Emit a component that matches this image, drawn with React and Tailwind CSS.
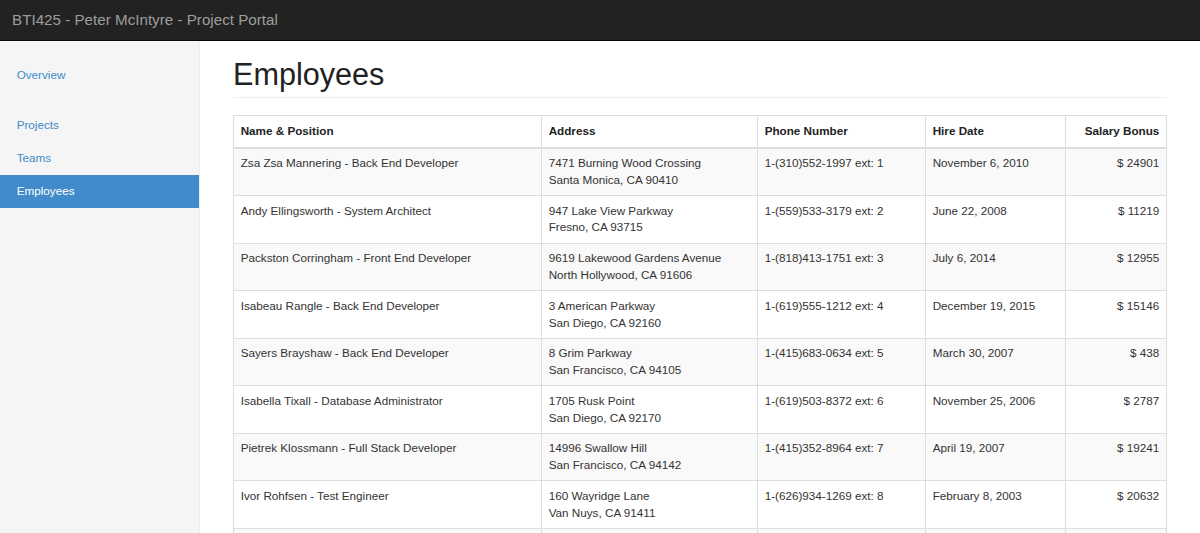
import React from "react";

const employees = [
  { name: "Zsa Zsa Mannering - Back End Developer", street: "7471 Burning Wood Crossing", city: "Santa Monica, CA 90410", phone: "1-(310)552-1997 ext: 1", hired: "November 6, 2010", bonus: "$ 24901" },
  { name: "Andy Ellingsworth - System Architect", street: "947 Lake View Parkway", city: "Fresno, CA 93715", phone: "1-(559)533-3179 ext: 2", hired: "June 22, 2008", bonus: "$ 11219" },
  { name: "Packston Corringham - Front End Developer", street: "9619 Lakewood Gardens Avenue", city: "North Hollywood, CA 91606", phone: "1-(818)413-1751 ext: 3", hired: "July 6, 2014", bonus: "$ 12955" },
  { name: "Isabeau Rangle - Back End Developer", street: "3 American Parkway", city: "San Diego, CA 92160", phone: "1-(619)555-1212 ext: 4", hired: "December 19, 2015", bonus: "$ 15146" },
  { name: "Sayers Brayshaw - Back End Developer", street: "8 Grim Parkway", city: "San Francisco, CA 94105", phone: "1-(415)683-0634 ext: 5", hired: "March 30, 2007", bonus: "$ 438" },
  { name: "Isabella Tixall - Database Administrator", street: "1705 Rusk Point", city: "San Diego, CA 92170", phone: "1-(619)503-8372 ext: 6", hired: "November 25, 2006", bonus: "$ 2787" },
  { name: "Pietrek Klossmann - Full Stack Developer", street: "14996 Swallow Hill", city: "San Francisco, CA 94142", phone: "1-(415)352-8964 ext: 7", hired: "April 19, 2007", bonus: "$ 19241" },
  { name: "Ivor Rohfsen - Test Engineer", street: "160 Wayridge Lane", city: "Van Nuys, CA 91411", phone: "1-(626)934-1269 ext: 8", hired: "February 8, 2003", bonus: "$ 20632" },
];

const App = () => {
  const cell = "px-[6.67px] py-[6.6px] align-top border-t border-l border-[#ddd] first:border-l-0";
  const head = "px-[6.67px] py-[7.1px] border-b-2 border-[#ddd]";

  return (
    <div
      className="h-screen overflow-hidden flex flex-col bg-white text-[#333] text-[11.7px] leading-[16.67px]"
      style={{ fontFamily: '"Liberation Sans", Arial, sans-serif' }}
    >
      {/* top navbar */}
      <div className="h-[41px] shrink-0 bg-[#222] border-b border-[#080808] flex items-center px-[12px]">
        <span className="text-[15.2px] text-[#9d9d9d]">BTI425 - Peter McIntyre - Project Portal</span>
      </div>

      <div className="flex flex-1 min-h-0">
        {/* sidebar */}
        <div className="w-[200px] shrink-0 bg-[#f5f5f5] border-r border-[#eee] pt-[17.5px]">
          <ul className="mb-[16.67px]">
            <li>
              <a className="block px-[16.67px] py-[8.33px] text-[#428bca]">Overview</a>
            </li>
          </ul>
          <ul>
            <li>
              <a className="block px-[16.67px] py-[8.33px] text-[#428bca]">Projects</a>
            </li>
            <li>
              <a className="block px-[16.67px] py-[8.33px] text-[#428bca]">Teams</a>
            </li>
            <li>
              <a className="block px-[16.67px] py-[8.33px] bg-[#428bca] text-white">Employees</a>
            </li>
          </ul>
        </div>

        {/* main */}
        <div className="flex-1 px-[33px] pt-[16.67px]">
          <h1 className="text-[30.6px] leading-[33px] text-[#222] pb-[6.5px] border-b border-[#eee] mb-[16.67px]">
            Employees
          </h1>

          <table className="w-full table-fixed border-collapse border border-[#ddd]">
            <colgroup>
              <col className="w-[308px]" />
              <col className="w-[216px]" />
              <col className="w-[168px]" />
              <col className="w-[140px]" />
              <col />
            </colgroup>
            <thead>
              <tr className="text-left font-bold text-[#222]">
                <th className={head}>Name &amp; Position</th>
                <th className={head + " border-l"}>Address</th>
                <th className={head + " border-l"}>Phone Number</th>
                <th className={head + " border-l"}>Hire Date</th>
                <th className={head + " border-l text-right"}>Salary Bonus</th>
              </tr>
            </thead>
            <tbody>
              {employees.map((emp, i) => (
                <tr key={i} className={i % 2 === 0 ? "bg-[#f9f9f9]" : "bg-white"}>
                  <td className={cell}>{emp.name}</td>
                  <td className={cell}>
                    {emp.street}
                    <br />
                    {emp.city}
                  </td>
                  <td className={cell}>{emp.phone}</td>
                  <td className={cell}>{emp.hired}</td>
                  <td className={cell + " text-right"}>{emp.bonus}</td>
                </tr>
              ))}
              {/* next row, scrolled below the fold */}
              <tr className="bg-[#f9f9f9] h-[47px]">
                <td className={cell}></td>
                <td className={cell}></td>
                <td className={cell}></td>
                <td className={cell}></td>
                <td className={cell}></td>
              </tr>
            </tbody>
          </table>
        </div>
      </div>
    </div>
  );
};

export default App;
